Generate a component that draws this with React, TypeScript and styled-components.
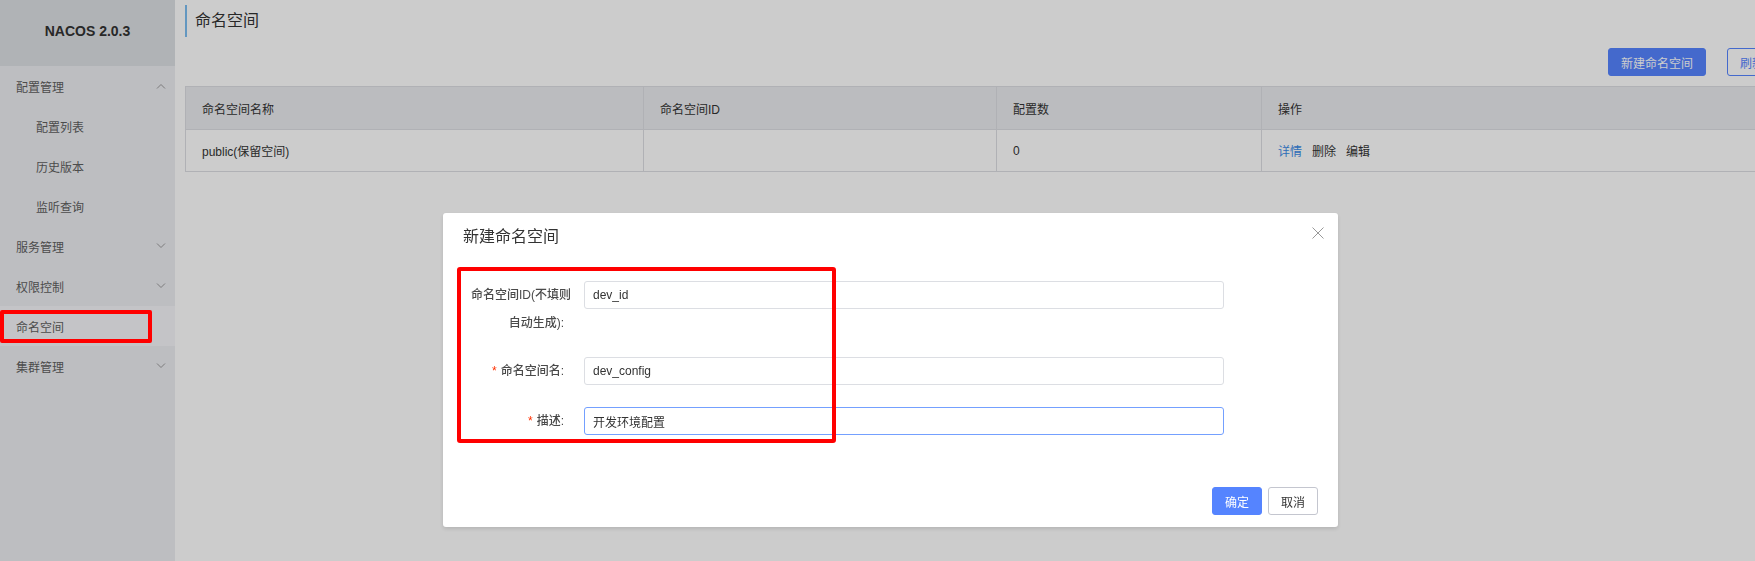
import React from "react";
import styled, { createGlobalStyle } from "styled-components";

const GlobalStyle = createGlobalStyle`
  html, body {
    margin: 0;
    padding: 0;
    overflow: hidden;
    background: #ffffff;
  }
  body {
    font-family: "Liberation Sans", "Noto Sans CJK SC", sans-serif;
    font-size: 12px;
    color: #333;
  }
  * { box-sizing: border-box; }
`;

const Page = styled.div`
  display: flex;
  width: 1787px;
  height: 561px;
  background: #ffffff;
`;

const Sidebar = styled.aside`
  width: 175px;
  flex: none;
  background: #edeef2;
  display: flex;
  flex-direction: column;
`;

const Brand = styled.div`
  height: 66px;
  background: #dde0e4;
  display: flex;
  align-items: center;
  justify-content: center;
  font-size: 14px;
  font-weight: bold;
  color: #333;
  padding-bottom: 4px;
`;

const NavItem = styled.div<{ $level: number; $active?: boolean }>`
  position: relative;
  height: 40px;
  display: flex;
  align-items: center;
  justify-content: space-between;
  padding: 0 9px 0 ${(p) => (p.$level === 2 ? 36 : 16)}px;
  font-size: 12px;
  color: #5f5f5f;
  background: ${(p) => (p.$active ? "#f5f6f9" : "transparent")};
`;

const NavHighlight = styled.div`
  position: absolute;
  left: 0;
  top: 4px;
  width: 152px;
  height: 33px;
  border: 4px solid #ff0000;
  border-radius: 2px;
  z-index: 20;
`;

const Main = styled.main`
  flex: 1;
  display: flex;
  flex-direction: column;
  padding: 5px 10px 0 10px;
`;

const PageTitle = styled.h1`
  margin: 0;
  height: 32px;
  line-height: 32px;
  border-left: 2px solid #7cbdf0;
  padding-left: 8px;
  font-size: 16px;
  font-weight: normal;
  color: #333;
`;

const Toolbar = styled.div`
  display: flex;
  justify-content: flex-end;
  gap: 21px;
  margin-top: 11px;
  margin-bottom: 10px;
`;

const Button = styled.button<{ $variant: "primary" | "secondary" | "normal" }>`
  height: 28px;
  padding: 0 12px;
  font-family: inherit;
  font-size: 12px;
  border-radius: 3px;
  cursor: pointer;
  border: 1px solid
    ${(p) => (p.$variant === "normal" ? "#c4c6cf" : "#5584ff")};
  background: ${(p) => (p.$variant === "primary" ? "#5584ff" : "#ffffff")};
  color: ${(p) =>
    p.$variant === "primary" ? "#ffffff" : p.$variant === "secondary" ? "#5584ff" : "#333"};
`;

const Table = styled.table`
  width: 100%;
  border-collapse: collapse;
  table-layout: fixed;
  border: 1px solid #dcdee3;
`;

const Th = styled.th`
  height: 43px;
  background: #eaebef;
  text-align: left;
  font-weight: normal;
  font-size: 12px;
  color: #333;
  padding: 0 16px;
  border: 1px solid #dcdee3;
`;

const Td = styled.td`
  height: 42px;
  font-size: 12px;
  color: #333;
  padding: 0 16px;
  border: 1px solid #dcdee3;
`;

const Actions = styled.div`
  display: flex;
  gap: 10px;
`;

const ActionLink = styled.span<{ $primary?: boolean }>`
  color: ${(p) => (p.$primary ? "#3a8ae6" : "#333")};
`;

const Mask = styled.div`
  position: fixed;
  inset: 0;
  background: rgba(0, 0, 0, 0.2);
  z-index: 10;
`;

const Dialog = styled.div`
  position: fixed;
  left: 443px;
  top: 213px;
  width: 895px;
  background: #ffffff;
  border-radius: 3px;
  box-shadow: 0 2px 4px rgba(0, 0, 0, 0.12);
  z-index: 15;
`;

const DialogHeader = styled.div`
  padding: 12px 20px;
  font-size: 16px;
  line-height: 24px;
  color: #333;
`;

const CloseButton = styled.span`
  position: absolute;
  top: 14px;
  right: 14px;
  width: 12px;
  height: 12px;
  display: flex;
`;

const DialogBody = styled.div`
  position: relative;
  padding: 20px;
`;

const FormHighlight = styled.div`
  position: absolute;
  left: 14px;
  top: 6px;
  width: 379px;
  height: 176px;
  border: 4px solid #ff0000;
  border-radius: 3px;
`;

const FormItem = styled.div<{ $spacing?: number }>`
  display: flex;
  align-items: flex-start;
  margin-bottom: ${(p) => p.$spacing ?? 20}px;
`;

const Label = styled.label`
  width: 121px;
  flex: none;
  text-align: right;
  padding-right: 20px;
  font-size: 12px;
  line-height: 28px;
  color: #4a4a4a;
  font-weight: 500;
`;

const LabelOverhang = styled.span`
  margin-right: -7px;
`;

const Required = styled.span`
  color: #ff3000;
  margin-right: 4px;
`;

const Input = styled.div<{ $focused?: boolean }>`
  width: 640px;
  height: 28px;
  border: 1px solid ${(p) => (p.$focused ? "#74a0ff" : "#dcdee3")};
  border-radius: 3px;
  padding: 0 8px;
  display: flex;
  align-items: center;
  font-size: 12px;
  color: #333;
  background: #fff;
`;

const DialogFooter = styled.div`
  display: flex;
  justify-content: flex-end;
  gap: 6px;
  padding: 12px 20px;
`;

const Chevron = ({ up }: { up?: boolean }) => (
  <svg width="10" height="6" viewBox="0 0 10 6" fill="none">
    <polyline
      points={up ? "1,5.5 5,1.5 9,5.5" : "1,0.5 5,4.5 9,0.5"}
      stroke="#9a9a9a"
      strokeWidth="1"
    />
  </svg>
);

const CloseIcon = () => (
  <svg width="12" height="12" viewBox="0 0 12 12" fill="none">
    <path d="M0.5 0.5 L11.5 11.5 M11.5 0.5 L0.5 11.5" stroke="#999" strokeWidth="1" />
  </svg>
);

const navItems: { label: string; level: number; chevron?: "up" | "down"; active?: boolean }[] = [
  { label: "配置管理", level: 1, chevron: "up" },
  { label: "配置列表", level: 2 },
  { label: "历史版本", level: 2 },
  { label: "监听查询", level: 2 },
  { label: "服务管理", level: 1, chevron: "down" },
  { label: "权限控制", level: 1, chevron: "down" },
  { label: "命名空间", level: 1, active: true },
  { label: "集群管理", level: 1, chevron: "down" },
];

export default function App() {
  return (
    <>
      <GlobalStyle />
      <Page>
        <Sidebar>
          <Brand>NACOS 2.0.3</Brand>
          {navItems.map((item) => (
            <NavItem key={item.label} $level={item.level} $active={item.active}>
              <span>{item.label}</span>
              {item.chevron && <Chevron up={item.chevron === "up"} />}
              {item.active && <NavHighlight />}
            </NavItem>
          ))}
        </Sidebar>
        <Main>
          <PageTitle>命名空间</PageTitle>
          <Toolbar>
            <Button $variant="primary">新建命名空间</Button>
            <Button $variant="secondary">刷新</Button>
          </Toolbar>
          <Table>
            <colgroup>
              <col style={{ width: 458 }} />
              <col style={{ width: 353 }} />
              <col style={{ width: 265 }} />
              <col />
            </colgroup>
            <thead>
              <tr>
                <Th>命名空间名称</Th>
                <Th>命名空间ID</Th>
                <Th>配置数</Th>
                <Th>操作</Th>
              </tr>
            </thead>
            <tbody>
              <tr>
                <Td>public(保留空间)</Td>
                <Td></Td>
                <Td>0</Td>
                <Td>
                  <Actions>
                    <ActionLink $primary>详情</ActionLink>
                    <ActionLink>删除</ActionLink>
                    <ActionLink>编辑</ActionLink>
                  </Actions>
                </Td>
              </tr>
            </tbody>
          </Table>
        </Main>
      </Page>
      <Mask />
      <Dialog>
        <DialogHeader>新建命名空间</DialogHeader>
        <CloseButton>
          <CloseIcon />
        </CloseButton>
        <DialogBody>
          <FormItem>
            <Label>
              <LabelOverhang>命名空间ID(不填则</LabelOverhang>
              <br />
              自动生成):
            </Label>
            <Input>dev_id</Input>
          </FormItem>
          <FormItem $spacing={22}>
            <Label>
              <Required>*</Required>命名空间名:
            </Label>
            <Input>dev_config</Input>
          </FormItem>
          <FormItem>
            <Label>
              <Required>*</Required>描述:
            </Label>
            <Input $focused>开发环境配置</Input>
          </FormItem>
          <FormHighlight />
        </DialogBody>
        <DialogFooter>
          <Button $variant="primary">确定</Button>
          <Button $variant="normal">取消</Button>
        </DialogFooter>
      </Dialog>
    </>
  );
}
